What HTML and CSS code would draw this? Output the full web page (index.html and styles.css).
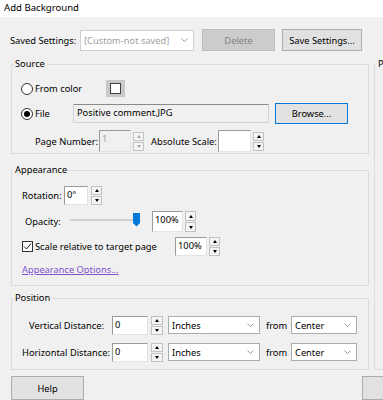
FILE: index.html
```html
<!DOCTYPE html>
<html>
<head>
    <meta charset="UTF-8">
    <title>Add Background</title>
    <link rel="stylesheet" href="styles.css">
</head>
<body>
    <div class="titlebar">Add Background</div>

    <div class="toprow">
        <span class="saved-label">Saved Settings:</span>
        <div class="select select-saved disabled-text">
            <span class="select-text">[Custom-not saved]</span>
            <svg class="chev" width="7" height="5" viewBox="0 0 7 5"><polyline points="0.5,0.5 3.5,3.5 6.5,0.5" fill="none" stroke="#9a9a9a" stroke-width="1"/></svg>
        </div>
        <button class="btn btn-delete" disabled>Delete</button>
        <button class="btn btn-save">Save Settings...</button>
    </div>

    <div class="content">
        <div class="left">
            <fieldset class="group group-source">
                <legend>Source</legend>
                <div class="inner source-inner">
                    <div class="row row-color">
                        <span class="radio"></span>
                        <span class="opt-label color-label">From color</span>
                        <span class="swatch"><span class="swatch-inner"></span></span>
                    </div>
                    <div class="row row-file">
                        <span class="radio checked"></span>
                        <span class="opt-label file-label">File</span>
                        <div class="filefield">Positive comment.JPG</div>
                        <button class="btn btn-browse">Browse...</button>
                    </div>
                    <div class="row row-page">
                        <span class="field-label page-label">Page Number:</span>
                        <div class="input input-page disabled-text">1</div>
                        <div class="spin spin-disabled"><span class="up"></span><span class="down"></span></div>
                        <span class="field-label scale-label">Absolute Scale:</span>
                        <div class="input input-scale"></div>
                        <div class="spin"><span class="up"></span><span class="down"></span></div>
                    </div>
                </div>
            </fieldset>

            <fieldset class="group group-appearance">
                <legend>Appearance</legend>
                <div class="inner appearance-inner">
                    <div class="row row-rotation">
                        <span class="field-label rotation-label">Rotation:</span>
                        <div class="input input-rotation">0°</div>
                        <div class="spin"><span class="up"></span><span class="down"></span></div>
                    </div>
                    <div class="row row-opacity">
                        <span class="field-label opacity-label">Opacity:</span>
                        <div class="slider">
                            <span class="track"></span>
                            <svg class="thumb" width="7" height="14" viewBox="0 0 7 14"><path d="M0 0 H7 V10 L3.5 13.5 L0 10 Z" fill="#0078d7"/></svg>
                        </div>
                        <div class="input input-opacity">100%</div>
                        <div class="spin spin-tall"><span class="up"></span><span class="down"></span></div>
                    </div>
                    <div class="row row-scale">
                        <span class="checkbox">
                            <svg width="9" height="9" viewBox="0 0 9 9"><polyline points="1,4.5 3.5,7 8,1.5" fill="none" stroke="#222" stroke-width="1"/></svg>
                        </span>
                        <span class="opt-label scale-rel-label">Scale relative to target page</span>
                        <div class="input input-relscale">100%</div>
                        <div class="spin"><span class="up"></span><span class="down"></span></div>
                    </div>
                    <div class="row row-link">
                        <a class="link" href="#">Appearance Options...</a>
                    </div>
                </div>
            </fieldset>

            <fieldset class="group group-position">
                <legend>Position</legend>
                <div class="inner position-inner">
                    <div class="row row-dist">
                        <span class="dist-label">Vertical Distance:</span>
                        <div class="input input-dist">0</div>
                        <div class="spin"><span class="up"></span><span class="down"></span></div>
                        <div class="select select-unit">
                            <span class="select-text">Inches</span>
                            <svg class="chev" width="7" height="5" viewBox="0 0 7 5"><polyline points="0.5,0.5 3.5,3.5 6.5,0.5" fill="none" stroke="#9a9a9a" stroke-width="1"/></svg>
                        </div>
                        <span class="from">from</span>
                        <div class="select select-from">
                            <span class="select-text">Center</span>
                            <svg class="chev" width="7" height="5" viewBox="0 0 7 5"><polyline points="0.5,0.5 3.5,3.5 6.5,0.5" fill="none" stroke="#9a9a9a" stroke-width="1"/></svg>
                        </div>
                    </div>
                    <div class="row row-dist">
                        <span class="dist-label">Horizontal Distance:</span>
                        <div class="input input-dist">0</div>
                        <div class="spin"><span class="up"></span><span class="down"></span></div>
                        <div class="select select-unit">
                            <span class="select-text">Inches</span>
                            <svg class="chev" width="7" height="5" viewBox="0 0 7 5"><polyline points="0.5,0.5 3.5,3.5 6.5,0.5" fill="none" stroke="#9a9a9a" stroke-width="1"/></svg>
                        </div>
                        <span class="from">from</span>
                        <div class="select select-from">
                            <span class="select-text">Center</span>
                            <svg class="chev" width="7" height="5" viewBox="0 0 7 5"><polyline points="0.5,0.5 3.5,3.5 6.5,0.5" fill="none" stroke="#9a9a9a" stroke-width="1"/></svg>
                        </div>
                    </div>
                </div>
            </fieldset>
        </div>

        <fieldset class="group group-side">
            <legend>Page Range Options</legend>
        </fieldset>
    </div>

    <div class="bottomrow">
        <button class="btn btn-help">Help</button>
        <button class="btn btn-ok">OK</button>
    </div>
</body>
</html>
```

FILE: styles.css
```css
html, body {
    overflow: hidden;
}
body {
    margin: 0;
    width: 383px;
    height: 400px;
    background-color: #f0f0f0;
    font-family: "Noto Sans", "Open Sans", sans-serif;
    font-size: 9.3px;
    color: #000;
}
.titlebar {
    height: 17px;
    line-height: 16px;
    padding-left: 4px;
    background-color: #fff;
    font-size: 9.6px;
}

/* top row */
.toprow {
    display: flex;
    align-items: center;
    height: 22px;
    margin-top: 12px;
    padding-left: 10px;
}
.saved-label {
    width: 70px;
}
.select {
    display: flex;
    align-items: center;
    box-sizing: border-box;
    background-color: #fff;
    border: 1px solid #acacac;
    padding-left: 3px;
    padding-right: 5px;
}
.select-text {
    flex: 1;
    white-space: nowrap;
}
.select-saved {
    width: 114px;
    height: 21px;
    border-color: #cfcfcf;
}
.disabled-text {
    color: #a0a0a0;
}
.btn {
    box-sizing: border-box;
    font-family: inherit;
    font-size: inherit;
    color: #000;
    background-color: #e1e1e1;
    border: 1px solid #adadad;
    padding: 0;
    margin: 0;
}
.btn-delete {
    width: 73px;
    height: 22px;
    margin-left: 8px;
    background-color: #cccccc;
    border-color: #bfbfbf;
    color: #838383;
}
.btn-save {
    width: 80px;
    height: 22px;
    margin-left: 7px;
}

/* groups */
.content {
    display: flex;
    margin-top: 6px;
    padding-left: 11px;
}
.left {
    width: 358px;
    flex-shrink: 0;
}
.group {
    margin: 0;
    padding: 0;
    min-width: 0;
    border: 1px solid #dcdcdc;
}
.group legend {
    height: 14px;
    line-height: 14px;
    padding: 0 2px;
    margin-left: 1px;
}
.inner {
    padding-left: 9px;
}
.row {
    display: flex;
    align-items: center;
}

/* source */
.group-source {
    height: 97px;
    box-sizing: border-box;
}
.row-color {
    height: 17px;
    margin-top: 9px;
}
.row-file {
    height: 21px;
    margin-top: 6px;
}
.row-page {
    height: 22px;
    margin-top: 6px;
}
.radio {
    box-sizing: border-box;
    width: 12px;
    height: 12px;
    border: 1px solid #333;
    border-radius: 50%;
    background-color: #fff;
    display: flex;
    align-items: center;
    justify-content: center;
}
.radio.checked::after {
    content: "";
    width: 6px;
    height: 6px;
    border-radius: 50%;
    background-color: #000;
}
.opt-label {
    margin-left: 2px;
    white-space: nowrap;
}
.color-label {
    width: 71px;
}
.file-label {
    width: 38px;
}
.swatch {
    box-sizing: border-box;
    width: 19px;
    height: 17px;
    background-color: #c8c8c8;
    display: flex;
    align-items: center;
    justify-content: center;
}
.swatch-inner {
    box-sizing: border-box;
    width: 11px;
    height: 11px;
    background-color: #fff;
    border: 1px solid #444;
}
.filefield {
    box-sizing: border-box;
    width: 196px;
    height: 19px;
    padding: 1px 0 0 3px;
    background-color: #f0f0f0;
    border: 1px solid #d2d2d2;
    border-top-color: #8a8a8a;
    align-self: flex-start;
    margin-top: 1px;
}
.btn-browse {
    width: 73px;
    height: 21px;
    margin-left: 6px;
    border-color: #0078d7;
}
.field-label {
    white-space: nowrap;
}
.page-label {
    width: 64px;
    margin-left: 14px;
}
.input {
    box-sizing: border-box;
    background-color: #fff;
    border: 1px solid #e3e3e3;
    border-top-color: #9a9a9a;
    border-left-color: #9a9a9a;
    padding: 1px 0 0 2px;
    white-space: nowrap;
    align-self: center;
}
.input-page {
    width: 32px;
    height: 22px;
    background-color: #f0f0f0;
}
.scale-label {
    width: 67px;
    margin-left: 7px;
}
.input-scale {
    width: 33px;
    height: 22px;
}

/* spinner */
.spin {
    display: flex;
    flex-direction: column;
    gap: 1px;
    width: 11px;
    margin-left: 2px;
}
.spin span {
    box-sizing: border-box;
    height: 9px;
    background-color: #f4f4f4;
    border: 1px solid #c2c2c2;
    display: flex;
    align-items: center;
    justify-content: center;
}
.spin-tall span {
    height: 10px;
}
.spin .up::after {
    content: "";
    border-left: 2.5px solid transparent;
    border-right: 2.5px solid transparent;
    border-bottom: 3px solid #000;
}
.spin .down::after {
    content: "";
    border-left: 2.5px solid transparent;
    border-right: 2.5px solid transparent;
    border-top: 3px solid #000;
}
.spin-disabled .up::after {
    border-bottom-color: #a8a8a8;
}
.spin-disabled .down::after {
    border-top-color: #a8a8a8;
}

/* appearance */
.group-appearance {
    margin-top: 9px;
    height: 123px;
    box-sizing: border-box;
}
.appearance-inner {
    padding-left: 10px;
}
.row-rotation {
    height: 19px;
    margin-top: 9px;
}
.rotation-label {
    width: 42px;
}
.input-rotation {
    width: 24px;
    height: 19px;
}
.row-rotation .spin {
    margin-left: 3px;
}
.row-opacity {
    height: 21px;
    margin-top: 6px;
}
.opacity-label {
    width: 45px;
    margin-left: 3px;
}
.slider {
    position: relative;
    width: 70px;
    height: 21px;
    margin-right: 12px;
}
.track {
    position: absolute;
    left: 0;
    right: 6px;
    top: 8px;
    height: 2px;
    background-color: #d0d0d0;
}
.thumb {
    position: absolute;
    left: 63px;
    top: 2px;
}
.input-opacity {
    width: 31px;
    height: 21px;
}
.row-scale {
    height: 19px;
    margin-top: 5px;
}
.checkbox {
    box-sizing: border-box;
    width: 11px;
    height: 11px;
    background-color: #fff;
    border: 1px solid #333;
    display: flex;
    align-items: center;
    justify-content: center;
}
.scale-rel-label {
    width: 140px;
}
.input-relscale {
    width: 32px;
    height: 19px;
}
.row-link {
    height: 14px;
    margin-top: 6px;
}
.link {
    color: #7b52c9;
    text-decoration: underline;
}

/* position */
.group-position {
    margin-top: 5px;
    height: 79px;
    box-sizing: border-box;
}
.position-inner {
    padding-left: 10px;
}
.row-dist {
    height: 20px;
    margin-top: 10px;
}
.row-dist + .row-dist {
    margin-top: 7px;
}
.dist-label {
    width: 82px;
    margin-right: 8px;
    text-align: right;
    white-space: nowrap;
}
.input-dist {
    width: 36px;
    height: 19px;
}
.row-dist .spin {
    margin-left: 3px;
    width: 12px;
}
.select-unit {
    width: 92px;
    height: 18px;
    margin-left: 5px;
}
.from {
    width: 25px;
    margin-left: 6px;
}
.select-from {
    width: 66px;
    height: 18px;
}

/* side panel, cut off at the window edge */
.group-side {
    margin-left: 5px;
    height: 313px;
    width: 120px;
    flex-shrink: 0;
    box-sizing: border-box;
}
.group-side legend {
    white-space: nowrap;
}

.bottomrow {
    display: flex;
    justify-content: space-between;
    margin-top: 6px;
    padding-left: 11px;
}
.btn-help {
    width: 73px;
    height: 24px;
}
.btn-ok {
    width: 73px;
    height: 24px;
    margin-right: -52px;
}
```
